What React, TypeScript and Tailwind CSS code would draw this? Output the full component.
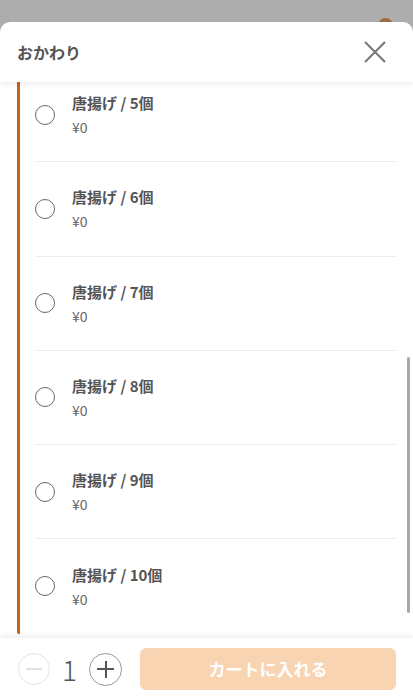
import React from "react";

const items = [5, 6, 7, 8, 9, 10];

const font = { fontFamily: '"Noto Sans CJK JP", "Noto Sans", sans-serif' };

export default function App() {
  return (
    <div
      className="relative w-[413px] h-[700px] bg-[#adadad] flex flex-col overflow-hidden pt-[22px]"
      style={font}
    >
      {/* badge peeking behind the sheet */}
      <div className="absolute left-[378px] top-[18px] w-[15px] h-[15px] rounded-full bg-[#9c6b3e]" />

      <div className="relative z-10 flex-1 flex flex-col bg-white rounded-t-[10px] min-h-0">
        {/* header */}
        <div className="relative z-20 h-[60px] shrink-0 flex items-center justify-between pl-[17px] pr-[26px] shadow-[0_3px_5px_rgba(0,0,0,0.06)]">
          <h2 className="text-[16px] font-bold text-[#555]">おかわり</h2>
          <svg width="24" height="24" viewBox="0 0 24 24" className="text-[#777]">
            <path d="M2 2 L22 22 M22 2 L2 22" stroke="currentColor" strokeWidth="2" fill="none" />
          </svg>
        </div>

        {/* list */}
        <div className="relative flex-1 min-h-0 overflow-hidden">
          <div className="-mt-[14px] ml-[17px] mr-[17px] border-l-[3px] border-[#c5621b] rounded-bl-[2px]">
            {items.map((n, i) => (
              <div
                key={n}
                className={`ml-[15px] h-[94.25px] flex items-center ${
                  i < items.length - 1 ? "border-b border-[#ededed]" : ""
                }`}
              >
                <div className="w-[20px] h-[20px] rounded-full border-[1.5px] border-[#666] shrink-0" />
                <div className="ml-[17px] flex flex-col pt-[1px]">
                  <span className="text-[15px] font-bold text-[#555] leading-[20px]">
                    唐揚げ / {n}個
                  </span>
                  <span className="text-[14px] text-[#666] leading-[20px] mt-[4px]">¥0</span>
                </div>
              </div>
            ))}
          </div>
          {/* scrollbar */}
          <div className="absolute right-[3px] top-[275px] w-[3px] h-[256px] rounded-full bg-[#a8a8a8]" />
        </div>

        {/* footer */}
        <div className="relative z-20 h-[62px] shrink-0 flex items-center pl-[18px] pr-[17px] shadow-[0_-3px_5px_rgba(0,0,0,0.06)]">
          <div className="w-[32px] h-[32px] rounded-full border border-[#e6e6e6] flex items-center justify-center">
            <div className="w-[16px] h-[2px] bg-[#e0e0e0]" />
          </div>
          <span className="w-[39px] text-center text-[28px] font-light text-[#555] leading-none">1</span>
          <div className="w-[33px] h-[33px] rounded-full border border-[#999] flex items-center justify-center relative">
            <div className="w-[17px] h-[2px] bg-[#555]" />
            <div className="absolute w-[2px] h-[17px] bg-[#555]" />
          </div>
          <button className="ml-[18px] flex-1 h-[42px] rounded-[6px] bg-[#f8d4b2] text-white text-[17px] font-bold">
            カートに入れる
          </button>
        </div>
      </div>
    </div>
  );
}
